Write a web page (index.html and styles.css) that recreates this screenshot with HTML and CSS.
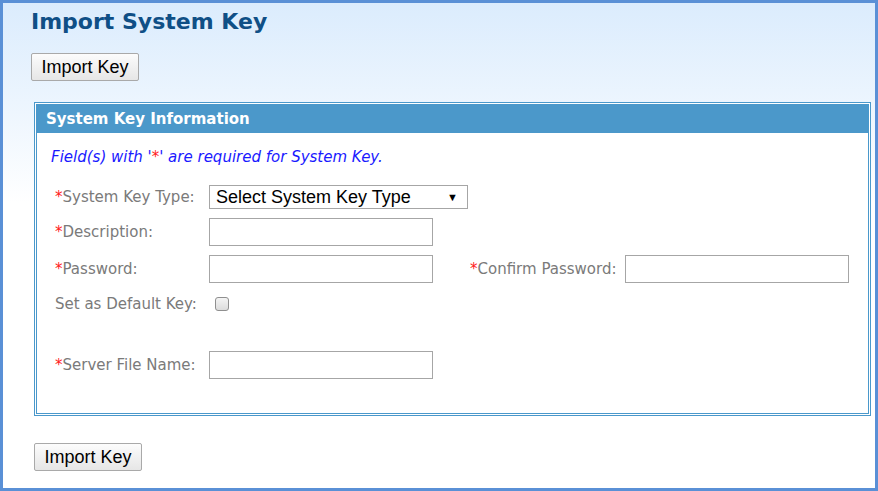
FILE: index.html
```html
<!DOCTYPE html>
<html>
<head>
<meta charset="utf-8">
<link rel="stylesheet" href="styles.css">
</head>
<body>
<div class="frame">
  <h1 class="title">Import System Key</h1>
  <button class="btn btn-top">Import Key</button>
  <div class="panel">
    <div class="panel-head">System Key Information</div>
    <div class="panel-body">
      <p class="note">Field(s) with '<span class="req">*</span>' are required for System Key.</p>
      <div class="row row-select">
        <label class="lbl"><span class="req">*</span>System Key Type:</label>
        <div class="select"><span>Select System Key Type</span><span class="caret">&#9660;</span></div>
      </div>
      <div class="row row-desc">
        <label class="lbl"><span class="req">*</span>Description:</label>
        <div class="input"></div>
      </div>
      <div class="row row-pass">
        <label class="lbl"><span class="req">*</span>Password:</label>
        <div class="input"></div>
        <label class="lbl lbl2"><span class="req">*</span>Confirm Password:</label>
        <div class="input"></div>
      </div>
      <div class="row row-check">
        <label class="lbl">Set as Default Key:</label>
        <div class="check"></div>
      </div>
      <div class="row row-file">
        <label class="lbl"><span class="req">*</span>Server File Name:</label>
        <div class="input"></div>
      </div>
    </div>
  </div>
  <button class="btn btn-bottom">Import Key</button>
</div>
</body>
</html>
```

FILE: styles.css
```css
html, body {
  margin: 0;
  padding: 0;
}
.frame {
  width: 878px;
  height: 491px;
  box-sizing: border-box;
  border: 3px solid #5a90d6;
  background: linear-gradient(to bottom, #dbecfd 0px, #eef6fe 110px, #ffffff 200px, #ffffff 100%);
  padding: 0 0 0 28px;
}
.title {
  margin: 0;
  padding-top: 6px;
  height: 39px;
  box-sizing: border-box;
  font-family: "DejaVu Sans", Verdana, sans-serif;
  font-weight: bold;
  font-size: 22px;
  color: #0f4f86;
  line-height: 26px;
  white-space: nowrap;
}
.btn {
  display: block;
  box-sizing: border-box;
  font-family: "Liberation Sans", Arial, sans-serif;
  font-size: 18px;
  color: #000;
  border: 1px solid #a9a9a9;
  border-radius: 2px;
  background: linear-gradient(to bottom, #fcfcfc, #e6e6e6);
  padding: 0;
  height: 28px;
  line-height: 26px;
  width: 108px;
  text-align: center;
  white-space: nowrap;
}
.btn-top {
  margin-top: 11px;
}
.btn-bottom {
  margin: 27px 0 0 3px;
}
.panel {
  margin: 21px 0 0 3px;
  width: 837px;
  height: 314px;
  box-sizing: border-box;
  border: 3px double #4a98cb;
  background: #fff;
}
.panel-head {
  background: #4b98ca;
  color: #fff;
  font-family: "DejaVu Sans", Tahoma, sans-serif;
  font-weight: bold;
  font-size: 15px;
  height: 28px;
  line-height: 28px;
  padding-left: 9px;
  white-space: nowrap;
}
.panel-body {
  padding: 15px 0 0 14px;
  font-family: "DejaVu Sans", Tahoma, sans-serif;
  font-size: 15px;
  color: #7a7a7a;
}
.note {
  margin: 0;
  font-style: italic;
  color: #1a1aff;
  line-height: 18px;
  height: 18px;
  white-space: nowrap;
}
.req {
  color: #ff2020;
}
.row {
  display: flex;
  align-items: center;
  padding-left: 4px;
  white-space: nowrap;
}
.row-select {
  margin-top: 19px;
  height: 24px;
}
.row-desc {
  margin-top: 9px;
  height: 28px;
}
.row-pass {
  margin-top: 9px;
  height: 28px;
}
.row-check {
  margin-top: 14px;
  height: 14px;
}
.row-file {
  margin-top: 40px;
  height: 28px;
}
.lbl {
  width: 154px;
  flex: none;
}
.lbl2 {
  width: 155px;
  margin-left: 37px;
}
.input {
  width: 224px;
  height: 28px;
  box-sizing: border-box;
  border: 1px solid #a6a6a6;
  background: #fff;
  flex: none;
}
.select {
  width: 259px;
  height: 24px;
  box-sizing: border-box;
  border: 1px solid #a6a6a6;
  background: #fff;
  display: flex;
  align-items: center;
  justify-content: space-between;
  padding: 0 9px 0 6px;
  font-family: "Liberation Sans", Arial, sans-serif;
  font-size: 18px;
  color: #000;
}
.caret {
  font-size: 11px;
}
.check {
  width: 14px;
  height: 14px;
  box-sizing: border-box;
  border: 1px solid #8f8f8f;
  border-radius: 3px;
  background: linear-gradient(to bottom, #f4f4f4, #dcdcdc);
  margin-left: 6px;
}
```
